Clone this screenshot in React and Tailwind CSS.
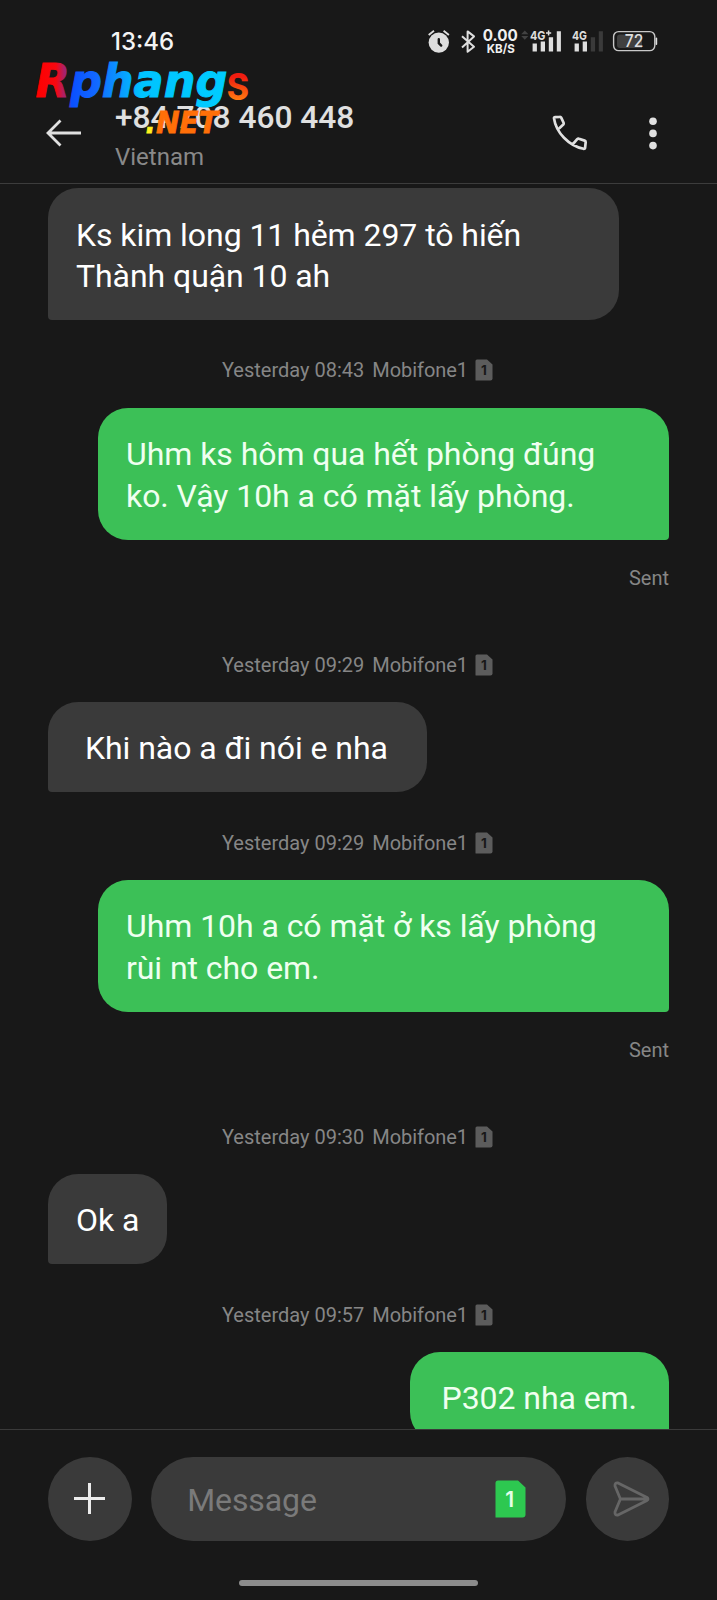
import React from "react";

const messages = [
  { from: "them", lines: ["Ks kim long 11 hẻm 297 tô hiến", "Thành quận 10 ah"] },
  { time: "Yesterday 08:43", from: "me", sent: true, lines: ["Uhm ks hôm qua hết phòng đúng", "ko. Vậy 10h a có mặt lấy phòng."] },
  { time: "Yesterday 09:29", from: "them", padding: "pl-[37px] pr-[39px]", lines: ["Khi nào a đi nói e nha"] },
  { time: "Yesterday 09:29", from: "me", sent: true, lines: ["Uhm 10h a có mặt ở ks lấy phòng", "rùi nt cho em."] },
  { time: "Yesterday 09:30", from: "them", lines: ["Ok a"] },
  { time: "Yesterday 09:57", from: "me", padding: "pl-[32px] pr-[32px]", lines: ["P302 nha em."] },
];

// Status bar
const StatusIcons = () => (
  <svg width="232" height="30" viewBox="427 27 232 30" fill="#dedede" fontFamily="Inter, sans-serif">
    {/* alarm */}
    <circle cx="438.8" cy="42.6" r="10.2" />
    <path d="M428.7 35l5.3-4.2M448.9 35l-5.3-4.2" stroke="#dedede" strokeWidth="1.9" />
    <path d="M438.8 39.2v4l2.4 2.4" stroke="#181818" strokeWidth="2.4" fill="none" strokeLinecap="round" />
    {/* bluetooth */}
    <path d="M462 36.2l12 10.6-6.4 5V31.4l6.4 5L462 47.4" stroke="#dedede" strokeWidth="2" fill="none" strokeLinejoin="round" />
    {/* net speed */}
    <text x="482.8" y="41.4" fontSize="15.8" fontWeight="700" textLength="35" lengthAdjust="spacingAndGlyphs" fill="#f0f0f0">0.00</text>
    <text x="486.8" y="52.8" fontSize="12.4" fontWeight="700" textLength="28" lengthAdjust="spacingAndGlyphs" fill="#f0f0f0">KB/S</text>
    <path d="M521.2 34.2l3.6-3.8 3.6 3.8zM521.2 36l3.6 3.8 3.6-3.8z" fill="#424242" />
    {/* sim 1 */}
    <text x="530" y="39.6" fontSize="12.4" fontWeight="700" textLength="15.5" lengthAdjust="spacingAndGlyphs">4G</text>
    <path d="M546 33h5.2M548.6 30.4v5.2" stroke="#dedede" strokeWidth="1.5" />
    <path d="M532.6 43.6h4.3v7.8h-4.3zM540.7 41.4h4.3v10h-4.3zM548.8 37.2h4.3v14.2h-4.3zM556.8 31.2h4.1v20.2h-4.1z" />
    {/* sim 2 */}
    <text x="572" y="39.6" fontSize="12.4" fontWeight="700" textLength="15" lengthAdjust="spacingAndGlyphs">4G</text>
    <path d="M574.6 43.6h4.3v7.8h-4.3zM582.7 41.4h4.3v10h-4.3z" />
    <path d="M590.8 37.2h4.3v14.2h-4.3zM598.8 31.2h4.1v20.2h-4.1z" fill="#3a3a3a" />
    {/* battery */}
    <rect x="613.6" y="31.6" width="41.2" height="19" rx="5" fill="none" stroke="#c8c8c8" strokeWidth="1.4" />
    <path d="M620 34.5h22v13.5h-22q-3 0-3-3v-7.5q0-3 3-3z" fill="#404040" />
    <rect x="655.6" y="37.6" width="1.6" height="7.4" rx="0.8" />
    <text x="624.8" y="47.3" fontSize="17" fontWeight="500" textLength="18.5" lengthAdjust="spacingAndGlyphs">72</text>
  </svg>
);

const Logo = () => (
  <svg className="absolute left-[30px] top-[55px]" width="230" height="85" viewBox="30 55 230 85">
    <defs>
      <linearGradient id="word" gradientUnits="userSpaceOnUse" x1="37" y1="0" x2="228" y2="0">
        <stop offset="0" stopColor="#ff0000" />
        <stop offset="0.1" stopColor="#f80810" />
        <stop offset="0.16" stopColor="#8a2a90" />
        <stop offset="0.18" stopColor="#0a50ff" />
        <stop offset="0.31" stopColor="#1268ff" />
        <stop offset="0.42" stopColor="#0a94ff" />
        <stop offset="0.55" stopColor="#00c4ff" />
        <stop offset="1" stopColor="#00ccff" />
      </linearGradient>
      <linearGradient id="tail" x1="0" y1="0" x2="0" y2="1">
        <stop offset="0.4" stopColor="#f01c10" />
        <stop offset="0.8" stopColor="#ff7a10" />
      </linearGradient>
    </defs>
    <text x="35.5" y="97" fontFamily="DejaVu Sans" fontWeight="700" fontStyle="italic" fontSize="46" textLength="192" lengthAdjust="spacingAndGlyphs" fill="url(#word)" stroke="url(#word)" strokeWidth="1">Rphang</text>
    <text x="226.5" y="99.5" fontFamily="Roboto, sans-serif" fontWeight="600" fontSize="50" textLength="23" lengthAdjust="spacingAndGlyphs" fill="url(#tail)">s</text>
    <text x="145.5" y="133" fontFamily="DejaVu Sans" fontWeight="700" fontStyle="italic" fontSize="30" textLength="10" lengthAdjust="spacingAndGlyphs" fill="#fff21e" stroke="#fff21e" strokeWidth="0.8">.</text>
    <text x="156" y="133" fontFamily="DejaVu Sans" fontWeight="700" fontStyle="italic" fontSize="30" textLength="62" lengthAdjust="spacingAndGlyphs" fill="#ff6f08" stroke="#ff6f08" strokeWidth="0.8">NET</text>
  </svg>
);

const Header = () => (
  <header className="relative h-[184px] shrink-0 border-b border-[#3c3c3c]">
    <div className="flex h-[84px] items-center justify-between pl-[111px] pr-[58px]">
      <span className="font-[Inter] text-[24px] font-medium leading-none text-[#f4f4f4]">13:46</span>
      <StatusIcons />
    </div>
    <div className="flex h-[99px] pl-[46px]">
      <svg className="mt-[35px]" width="36" height="28" viewBox="0 0 36 28" fill="none" stroke="#e0e0e0" strokeWidth="2.8">
        <path d="M35 14H2.5M14.5 1.5L2 14l12.5 12.5" />
      </svg>
      <div className="ml-[33px] flex-1">
        <h1 className="mt-[16px] text-[31.7px] font-medium leading-[36px] text-[#e0e0e0] whitespace-nowrap">+84 708 460 448</h1>
        <p className="mt-[7px] text-[24px] leading-[28px] text-[#898989]">Vietnam</p>
      </div>
      <svg className="mt-[31px]" width="36" height="36" viewBox="0 0 36 36" fill="none" stroke="#e0e0e0" strokeWidth="2.7" strokeLinejoin="round" strokeLinecap="round">
        <path d="M7.6 13L11.3 9.6Q12 8.8 11.6 7.8L9.2 2.6Q8.8 1.7 7.8 1.8L3.2 2.1Q1.9 2.2 2 3.4C4 17.5 16.8 30.8 31.5 33.8Q33 34 33.1 32.6L33.7 27.2Q33.7 26 32.6 25.6L27 23.8Q26 23.4 25.2 24.2L21 29" />
      </svg>
      <svg className="ml-[61px] mr-[60px] mt-[33px]" width="8" height="33" viewBox="0 0 8 33" fill="#e0e0e0">
        <circle cx="4" cy="4.2" r="3.8" />
        <circle cx="4" cy="16.4" r="3.8" />
        <circle cx="4" cy="28.6" r="3.8" />
      </svg>
    </div>
    <Logo />
  </header>
);

const TimeStamp = ({ time }) => (
  <div className="flex h-[87.4px] items-center justify-center pr-[2px] pt-[13px] text-[20px] text-[#868686]">
    <span>{time}</span>
    <span className="ml-[8px] tracking-[-0.05px]">Mobifone1</span>
    <svg className="ml-[7px]" width="18" height="22" viewBox="0 0 18 22">
      <path d="M2 0.5H12L17.5 5.5V19.5Q17.5 21.5 15.5 21.5H1Q0.5 21.5 0.5 21V2Q0.5 0.5 2 0.5Z" fill="#5c5c5c" />
      <text x="8.8" y="16" fontFamily="Inter, sans-serif" fontSize="13.5" fontWeight="700" textAnchor="middle" fill="#181818">1</text>
    </svg>
  </div>
);

const Message = ({ time, from, lines, sent, padding = "px-[28px]" }) => (
  <>
    {time && <TimeStamp time={time} />}
    <div className={from === "me" ? "flex justify-end" : "flex"}>
      <div
        className={
          (from === "me"
            ? "rounded-[30px] rounded-br-[4px] bg-[#3cc057] text-[#effff0] "
            : "rounded-[30px] rounded-bl-[4px] bg-[#3a3a3a] text-white ") +
          (lines.length > 1 ? "w-[571px] " : "") +
          padding +
          " pb-[22.6px] pt-[26.5px] text-[32px] leading-[41.4px] tracking-[-0.06px] whitespace-nowrap"
        }
      >
        {lines.map((line, i) => (
          <p key={i}>{line}</p>
        ))}
      </div>
    </div>
    {sent && (
      <div className="h-[74.9px] pt-[26.5px] text-right text-[20px] leading-[24px] text-[#868686]">Sent</div>
    )}
  </>
);

const Composer = () => (
  <footer className="flex h-[171px] shrink-0 flex-col items-center border-t border-[#3a3a3a] bg-[#181818] px-[48px] pt-[27px]">
    <div className="flex h-[83.5px] w-full justify-between">
      <div className="flex w-[83.5px] items-center justify-center rounded-full bg-[#3a3a3a]">
        <svg width="31" height="31" viewBox="0 0 31 31" stroke="#ececec" strokeWidth="3">
          <path d="M0 15.5h31M15.5 0v31" />
        </svg>
      </div>
      <div className="flex w-[414.5px] items-center justify-between rounded-full bg-[#3a3a3a] pl-[36px] pr-[40px]">
        <span className="pt-[2px] text-[32px] tracking-[-0.1px] text-[#7a7a7a]">Message</span>
        <svg width="31" height="38" viewBox="0 0 31 38">
          <path d="M3 0.5H23L30.5 7.5V34.5Q30.5 37.5 27.5 37.5H0.5V3Q0.5 0.5 3 0.5Z" fill="#2dc850" />
          <text x="14.8" y="27" fontFamily="Inter, sans-serif" fontSize="21" fontWeight="600" textAnchor="middle" fill="#e4ffe8">1</text>
        </svg>
      </div>
      <div className="flex w-[83.5px] items-center justify-center rounded-full bg-[#3a3a3a]">
        <svg className="ml-[9px]" width="37" height="36" viewBox="0 0 37 36" fill="none" stroke="#666666" strokeWidth="2.8" strokeLinejoin="round">
          <path d="M5 2L34 16.4Q36 18 34 19.4L5 34Q1.6 34.6 2 31L7.4 18L2 5Q1.6 1.4 5 2ZM7.4 18H34" />
        </svg>
      </div>
    </div>
    <div className="mt-[39.5px] h-[6px] w-[239px] rounded-full bg-[#8c8c8c]" />
  </footer>
);

export default function App() {
  return (
    <div className="flex h-[1600px] w-[717px] flex-col overflow-hidden bg-[#181818] font-[Roboto]">
      <Header />
      <main className="min-h-0 flex-1 overflow-hidden px-[48px] pt-[4.4px]">
        {messages.map((message, index) => (
          <Message key={index} {...message} />
        ))}
      </main>
      <Composer />
    </div>
  );
}
